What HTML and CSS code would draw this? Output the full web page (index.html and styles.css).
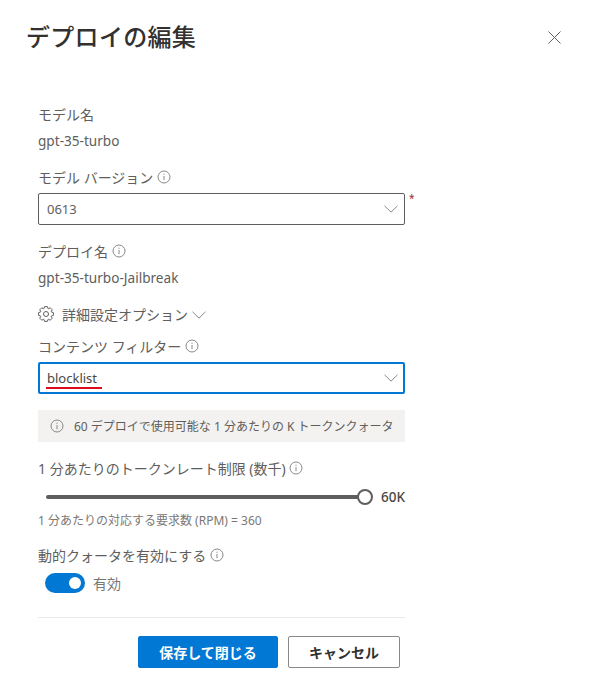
FILE: index.html
```html
<!DOCTYPE html>
<html lang="ja">
    <head>
        <meta charset="utf-8">
        <title>デプロイの編集</title>
        <link rel="stylesheet" href="styles.css">
    </head>
    <body>
        <svg class="sprites" width="0" height="0">
            <symbol id="info" viewBox="0 0 14 14">
                <circle cx="7" cy="7" r="6" fill="none" stroke="currentColor" stroke-width="1"/>
                <path d="M7 6v4.2M7 3.700v1.100" fill="none" stroke="currentColor" stroke-width="1"/>
            </symbol>
            <symbol id="chevron" viewBox="0 0 14 8">
                <path d="M.5.8 7 7.200 13.500.8" fill="none" stroke="currentColor" stroke-width="1"/>
            </symbol>
        </svg>

        <header class="panel-header">
            <h1>デプロイの編集</h1>
            <svg class="close-icon" width="13" height="13" viewBox="0 0 13 13">
                <path d="M.5.5l12 12M12.500.5l-12 12" fill="none" stroke="#605e5c" stroke-width="1"/>
            </svg>
        </header>

        <form class="form">
            <div class="row label first">モデル名</div>
            <div class="row value">gpt-35-turbo</div>

            <div class="row label gap-version">モデル バージョン <svg class="info"><use href="#info"/></svg></div>
            <div class="select-wrap">
                <div class="select">
                    <span>0613</span>
                    <svg class="chevron"><use href="#chevron"/></svg>
                </div>
                <span class="required">*</span>
            </div>

            <div class="row label gap-name">デプロイ名 <svg class="info"><use href="#info"/></svg></div>
            <div class="row value">gpt-35-turbo-Jailbreak</div>

            <div class="row advanced">
                <svg class="gear" width="16" height="16" viewBox="0 0 16 16">
                    <polygon points="13.45,6.02 15.36,6.57 15.36,9.43 13.45,9.98 13.26,10.45 14.22,12.19 12.19,14.22 10.45,13.26 9.98,13.45 9.43,15.36 6.57,15.36 6.02,13.45 5.55,13.26 3.81,14.22 1.78,12.19 2.74,10.45 2.55,9.98 .64,9.43 .64,6.57 2.55,6.02 2.74,5.55 1.78,3.81 3.81,1.78 5.55,2.74 6.02,2.55 6.57,.64 9.43,.64 9.98,2.55 10.45,2.74 12.19,1.78 14.22,3.81 13.26,5.55" fill="none" stroke="#605e5c" stroke-width="1" stroke-linejoin="round"/>
                    <circle cx="8" cy="8" r="2.500" fill="none" stroke="#605e5c" stroke-width="1"/>
                </svg>
                <span>詳細設定オプション</span>
                <svg class="chevron advanced-chevron"><use href="#chevron"/></svg>
            </div>

            <div class="row label gap-filter">コンテンツ フィルター <svg class="info"><use href="#info"/></svg></div>
            <div class="select focused">
                <span>blocklist</span>
                <svg class="chevron"><use href="#chevron"/></svg>
                <span class="red-mark"></span>
            </div>

            <div class="quota">
                <svg class="info quota-info"><use href="#info"/></svg>
                <span>60 デプロイで使用可能な 1 分あたりの K トークンクォータ</span>
            </div>

            <div class="row label gap-rate">1 分あたりのトークンレート制限 (数千) <svg class="info"><use href="#info"/></svg></div>
            <div class="slider">
                <div class="track"></div>
                <div class="thumb"></div>
                <span class="slider-value">60K</span>
            </div>
            <div class="row rpm">1 分あたりの対応する要求数 (RPM) = 360</div>

            <div class="row label gap-dynamic">動的クォータを有効にする <svg class="info"><use href="#info"/></svg></div>
            <div class="toggle-row">
                <div class="toggle"><div class="knob"></div></div>
                <span>有効</span>
            </div>

            <div class="divider"></div>

            <div class="buttons">
                <button type="button" class="btn primary">保存して閉じる</button>
                <button type="button" class="btn">キャンセル</button>
            </div>
        </form>
    </body>
</html>
```

FILE: styles.css
```css
/* General */
body {
    margin: 0;
    width: 591px;
    height: 699px;
    overflow: hidden;
    background-color: #fff;
    color: #323130;
    font-family: "Noto Sans", "Noto Sans CJK JP", sans-serif;
    font-size: 14px;
}

.sprites {
    display: block;
}

/* Header */
.panel-header {
    display: flex;
    justify-content: space-between;
    align-items: center;
    height: 38px;
    padding: 18px 30px 0 26px;
}

h1 {
    margin: 0;
    font-size: 24px;
    font-weight: 500;
    letter-spacing: 0.3px;
    line-height: 38px;
    color: #323130;
}

.close-icon {
    margin-top: 1px;
}

/* Form column */
.form {
    width: 367px;
    margin-left: 38px;
}

.row {
    display: flex;
    align-items: center;
    height: 20px;
}

.label {
    color: #605e5c;
    white-space: pre;
}

.value {
    margin-top: 6px;
    font-size: 13.6px;
    color: #605e5c;
}

.first { margin-top: 48px; }
.gap-version { margin-top: 17px; }
.gap-name { margin-top: 16px; }
.gap-filter { margin-top: 12px; }
.gap-rate { margin-top: 16px; }
.gap-dynamic { margin-top: 15px; }

.info {
    width: 14px;
    height: 14px;
    color: #8a8886;
}

.chevron {
    width: 14px;
    height: 8px;
    color: #8a8886;
}

/* Selects */
.select-wrap {
    position: relative;
    margin-top: 6px;
}

.required {
    position: absolute;
    left: 371px;
    top: 0;
    color: #a4262c;
    font-size: 10px;
    line-height: 10px;
}

.select {
    position: relative;
    display: flex;
    justify-content: space-between;
    align-items: center;
    box-sizing: border-box;
    height: 32px;
    padding: 0 6px 0 8px;
    border: 1px solid #605e5c;
    border-radius: 2px;
    font-size: 13px;
    color: #605e5c;
}

.select.focused {
    margin-top: 6px;
    border: 2px solid #0078d4;
    padding: 0 5px 0 7px;
    color: #484644;
}

.red-mark {
    position: absolute;
    left: 6px;
    top: 23px;
    width: 56px;
    height: 2px;
    background-color: #e00b1c;
}

/* Advanced options */
.advanced {
    margin-top: 17px;
    color: #605e5c;
}

.gear {
    margin-right: 8px;
}

.advanced-chevron {
    margin-left: 4px;
    margin-top: 1px;
}

/* Quota message */
.quota {
    display: flex;
    align-items: center;
    height: 32px;
    margin-top: 16px;
    background-color: #f3f2f1;
    font-size: 12px;
    color: #605e5c;
}

.quota-info {
    margin: 0 10px 0 12px;
}

/* Slider */
.slider {
    position: relative;
    height: 20px;
    margin-top: 9px;
}

.track {
    position: absolute;
    left: 8px;
    top: 8px;
    width: 320px;
    height: 4px;
    border-radius: 2px;
    background-color: #605e5c;
}

.thumb {
    position: absolute;
    left: 319px;
    top: 2px;
    box-sizing: border-box;
    width: 16px;
    height: 16px;
    border: 2px solid #605e5c;
    border-radius: 50%;
    background-color: #fff;
}

.slider-value {
    position: absolute;
    right: 0;
    top: 0;
    font-size: 13.5px;
    font-weight: 500;
    line-height: 20px;
    color: #484644;
}

.rpm {
    margin-top: 3px;
    font-size: 12px;
    color: #7a7876;
}

/* Toggle */
.toggle-row {
    display: flex;
    align-items: center;
    height: 20px;
    margin-top: 8px;
    padding-left: 7px;
    font-size: 14px;
    color: #7a7876;
}

.toggle {
    display: flex;
    justify-content: flex-end;
    align-items: center;
    box-sizing: border-box;
    width: 40px;
    height: 20px;
    margin-right: 8px;
    padding-right: 4px;
    border-radius: 10px;
    background-color: #0078d4;
}

.knob {
    width: 12px;
    height: 12px;
    border-radius: 50%;
    background-color: #fff;
}

/* Footer */
.divider {
    height: 1px;
    margin-top: 24px;
    background-color: #edebe9;
}

.buttons {
    display: flex;
    gap: 10px;
    margin-top: 18px;
    padding-left: 100px;
}

.btn {
    box-sizing: border-box;
    width: 112px;
    height: 32px;
    padding: 0;
    border: 1px solid #8a8886;
    border-radius: 2px;
    background-color: #fff;
    color: #323130;
    font-family: inherit;
    font-size: 14px;
    font-weight: 600;
}

.btn.primary {
    width: 140px;
    border-color: #0078d4;
    background-color: #0078d4;
    color: #fff;
}
```
